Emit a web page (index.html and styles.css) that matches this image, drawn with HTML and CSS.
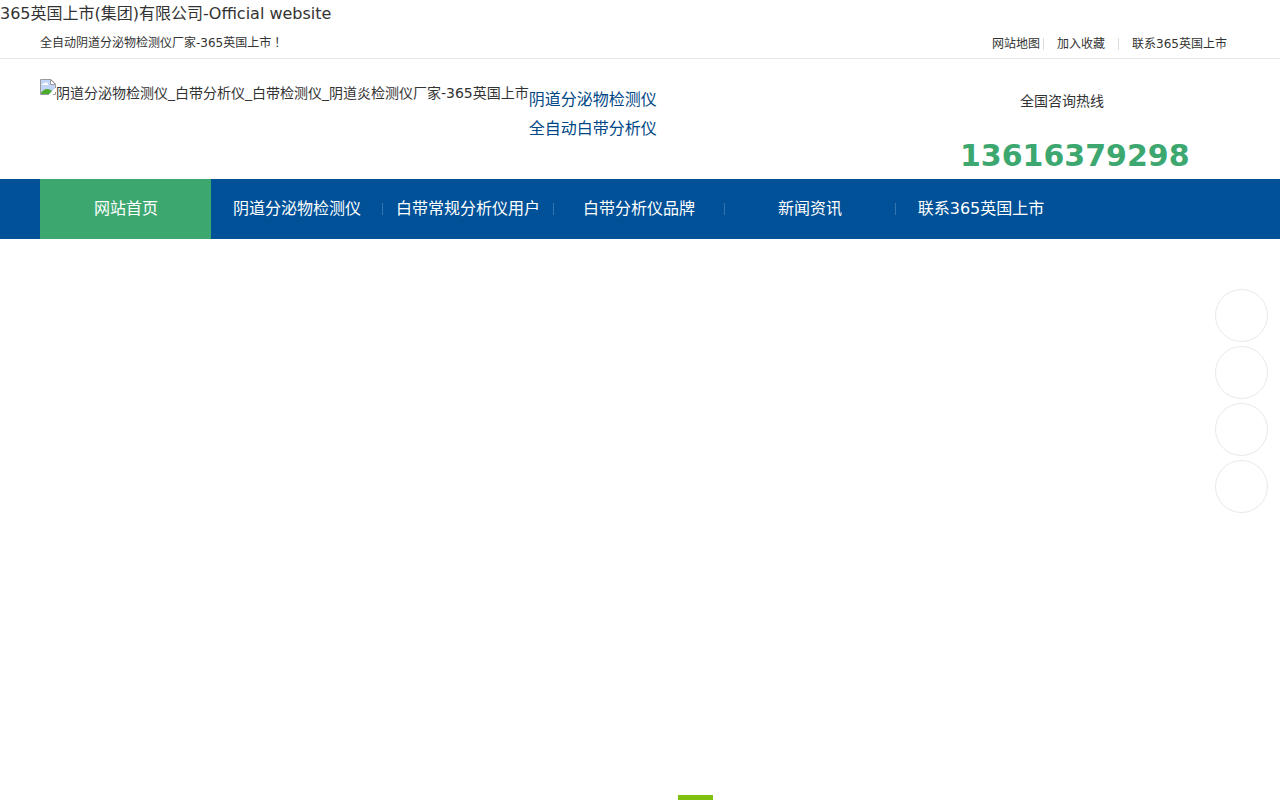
FILE: index.html
```
<!DOCTYPE html>
<html lang="zh-CN">
<head>
    <meta charset="UTF-8">
    <meta name="viewport" content="width=device-width, initial-scale=1.0">
    <title>365英国上市(集团)有限公司-Official website</title>
    <link rel="stylesheet" href="styles.css">
</head>
<body>
    <h1 class="site-title">365英国上市(集团)有限公司-Official website</h1>

    <div class="topbar">
        <div class="container topbar-inner">
            <p>全自动阴道分泌物检测仪厂家-365英国上市<span lang="zh-TW" class="mark">！</span></p>
            <ul class="top-links">
                <li><a href="#">网站地图</a></li>
                <li><a href="#">加入收藏</a></li>
                <li><a href="#">联系365英国上市</a></li>
            </ul>
        </div>
    </div>

    <header class="container header">
        <a class="logo" href="#">
            <svg width="16" height="16" viewBox="0 0 16 16" aria-hidden="true">
                <path d="M.5.5H11L15.500 5V9L9 15.500H.5z" fill="#c3d5f7"/>
                <path d="M2 6c0-2 2-2 2.500-1C5 3 8 3 8 6z" fill="#fff"/>
                <path d="M1 15v-1c3-5 8-5 11-2l-3 3z" fill="#4cab2c"/>
                <path d="M.5 15.500V.5H11L15.500 5V9M.5 15.500H9" fill="none" stroke="#9a9a9a"/>
                <path d="M16 9v3l-4 4H9z" fill="#fff"/>
                <path d="M15.500 13v2.500H13" fill="none" stroke="#9a9a9a"/>
                <path d="M10.500.5V5.500H15.500z" fill="#fff" stroke="#9a9a9a"/>
            </svg>
            <span>阴道分泌物检测仪_白带分析仪_白带检测仪_阴道炎检测仪厂家-365英国上市</span>
        </a>
        <div class="slogan">
            <p>阴道分泌物检测仪</p>
            <p>全自动白带分析仪</p>
        </div>
        <div class="hotline">
            <p>全国咨询热线</p>
            <strong>13616379298</strong>
        </div>
    </header>

    <nav class="nav">
        <ul class="container nav-list">
            <li class="active"><a href="#">网站首页</a></li>
            <li><a href="#">阴道分泌物检测仪</a></li>
            <li><a href="#">白带常规分析仪用户</a></li>
            <li><a href="#">白带分析仪品牌</a></li>
            <li><a href="#">新闻资讯</a></li>
            <li><a href="#">联系365英国上市</a></li>
        </ul>
    </nav>

    <!-- 轮播 -->
    <div class="banner">
        <div class="banner-dots">
            <button type="button" aria-label="1"></button>
            <button type="button" aria-label="2"></button>
            <button type="button" class="on" aria-label="3"></button>
        </div>
    </div>

    <!-- 右侧悬浮 -->
    <div class="side-tools">
        <a href="#" aria-label="QQ"></a>
        <a href="#" aria-label="电话"></a>
        <a href="#" aria-label="二维码"></a>
        <a href="#" aria-label="返回顶部"></a>
    </div>
</body>
</html>
```
FILE: styles.css
```
* {
    margin: 0;
    padding: 0;
    box-sizing: border-box;
}

body {
    font-family: "DejaVu Sans", "Noto Sans CJK SC", sans-serif;
    font-size: 14px;
    line-height: 28px;
    color: #333;
    background-color: #fff;
    min-height: 100vh;
    display: flex;
    flex-direction: column;
}

ul {
    list-style: none;
}

a {
    color: inherit;
    text-decoration: none;
}

.container {
    width: 100%;
    padding: 0 40px;
}

.site-title {
    font-size: 16px;
    font-weight: normal;
}

.topbar {
    border-bottom: 1px solid #e5e5e5;
    font-size: 12px;
    line-height: 30px;
}

.topbar-inner {
    display: flex;
    justify-content: space-between;
}

.mark {
    font-family: "Noto Sans CJK TC", sans-serif;
    line-height: 12px;
}

.top-links {
    display: flex;
    align-items: center;
    padding-top: 2px;
    line-height: 12px;
}

.top-links li {
    padding: 0 13px;
}

.top-links li:first-child {
    padding-right: 3px;
}

.top-links li + li {
    border-left: 1px solid #ddd;
}

.header {
    display: flex;
    height: 120px;
}

.logo {
    display: flex;
    padding-top: 20px;
}

.slogan {
    padding-top: 26px;
    font-size: 16px;
    line-height: 29px;
    color: #004785;
}

.hotline {
    width: 280px;
    margin-left: auto;
    padding-top: 28px;
}

.hotline p {
    padding-left: 60px;
}

.hotline strong {
    display: block;
    padding-top: 20px;
    font-size: 30px;
    line-height: 42px;
    color: #3ca870;
}

.nav {
    background-color: #005198;
}

.nav-list {
    display: flex;
}

.nav-list li {
    position: relative;
    width: 171px;
    font-size: 16px;
    line-height: 60px;
    text-align: center;
    color: #fff;
}

.nav-list a {
    display: block;
    padding-left: 1px;
}

.nav-list .active {
    background-color: #3ca870;
}

.nav-list li:nth-child(n+3)::before {
    content: "";
    position: absolute;
    left: 0;
    top: 24px;
    width: 1px;
    height: 12px;
    background-color: #3374ad;
}

.banner {
    flex: 1;
    display: flex;
    align-items: flex-end;
    justify-content: center;
    min-height: 400px;
}

.banner-dots {
    display: flex;
    gap: 20px;
}

.banner-dots button {
    width: 35px;
    height: 5px;
    border: none;
    background-color: #fff;
    cursor: pointer;
}

.banner-dots .on {
    background-color: #80c010;
}

.side-tools {
    position: fixed;
    right: 12px;
    top: 289px;
    display: flex;
    flex-direction: column;
    gap: 4px;
}

.side-tools a {
    width: 53px;
    height: 53px;
    border: 1px solid #e8e8e8;
    border-radius: 50%;
    background-color: #fff;
}
```
